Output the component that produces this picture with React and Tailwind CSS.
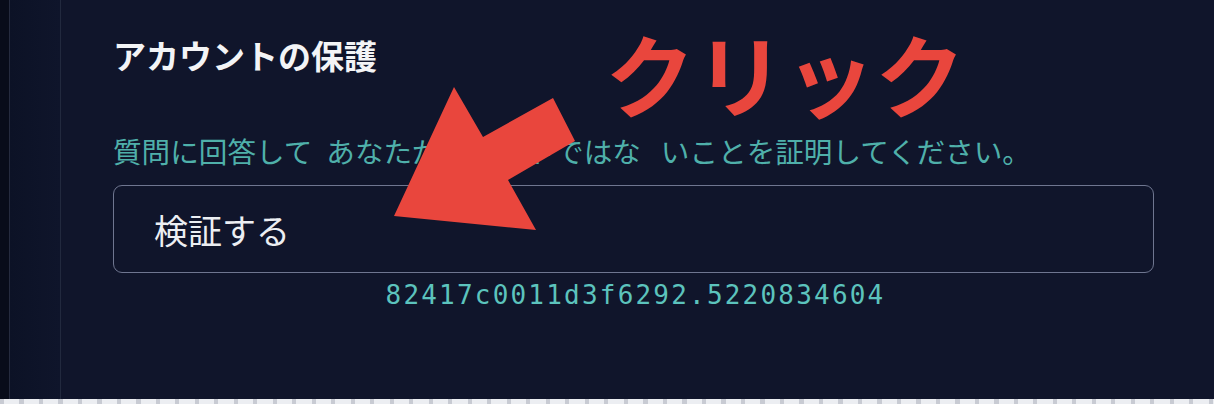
import React from "react";

// red annotation arrow drawn over the form
function Arrow() {
  return (
    <svg
      className="absolute left-0 top-0 pointer-events-none"
      width="1214"
      height="404"
      viewBox="0 0 1214 404"
    >
      <polygon
        points="394,216 454,87 483,137 553,98 575,141 508,180 536,230"
        fill="#e9463d"
      />
    </svg>
  );
}

export default function App() {
  return (
    <div
      className="relative w-[1214px] h-[404px] flex flex-col overflow-hidden bg-[#10152b]"
      style={{ fontFamily: '"Noto Sans CJK JP", "Noto Sans", sans-serif' }}
    >
      <div className="flex flex-1">
        {/* left rails */}
        <div className="w-[9px] bg-[#080c1a]" />
        <div className="w-[1px] bg-[#252b3f]" />
        <div className="w-[50px] bg-gradient-to-r from-[#0c1226] to-[#0f152b]" />
        <div className="w-[1px] bg-[#22293e]" />

        {/* main */}
        <main className="flex-1 flex flex-col pl-[52px] pr-[60px] pt-[35px]">
          <h2 className="text-[33px] leading-[40px] font-bold text-[#f3f4f6]">
            アカウントの保護
          </h2>

          <p className="mt-[58px] text-[28.6px] leading-[36px] text-[#4fb0aa] whitespace-nowrap">
            質問に回答して<span className="inline-block w-[14px]" />あなたがロボットではな
            <span className="inline-block w-[20px]" />いことを証明してください。
          </p>

          <button className="mt-[16px] h-[88px] w-full flex items-center pl-[40px] rounded-[9px] border border-[#6f7690] text-[34px] text-[#eceef2] text-left">
            検証する
          </button>

          <p
            className="mt-[5px] pl-[4px] text-center text-[26px] leading-[34px] tracking-[2.2px] text-[#5cc3bd]"
            style={{ fontFamily: '"DejaVu Sans Mono", "Liberation Mono", monospace' }}
          >
            82417c0011d3f6292.5220834604
          </p>
        </main>
      </div>

      {/* dotted bottom edge */}
      <div className="h-[5px] bg-[repeating-linear-gradient(90deg,#c8cbd3_0px,#c8cbd3_4px,#eceef2_4px,#eceef2_19.5px)]" />

      {/* annotations */}
      <div className="absolute left-[605px] top-[27px] text-[90px] leading-none font-bold text-[#e9463d] whitespace-nowrap">
        クリック
      </div>
      <Arrow />
    </div>
  );
}
